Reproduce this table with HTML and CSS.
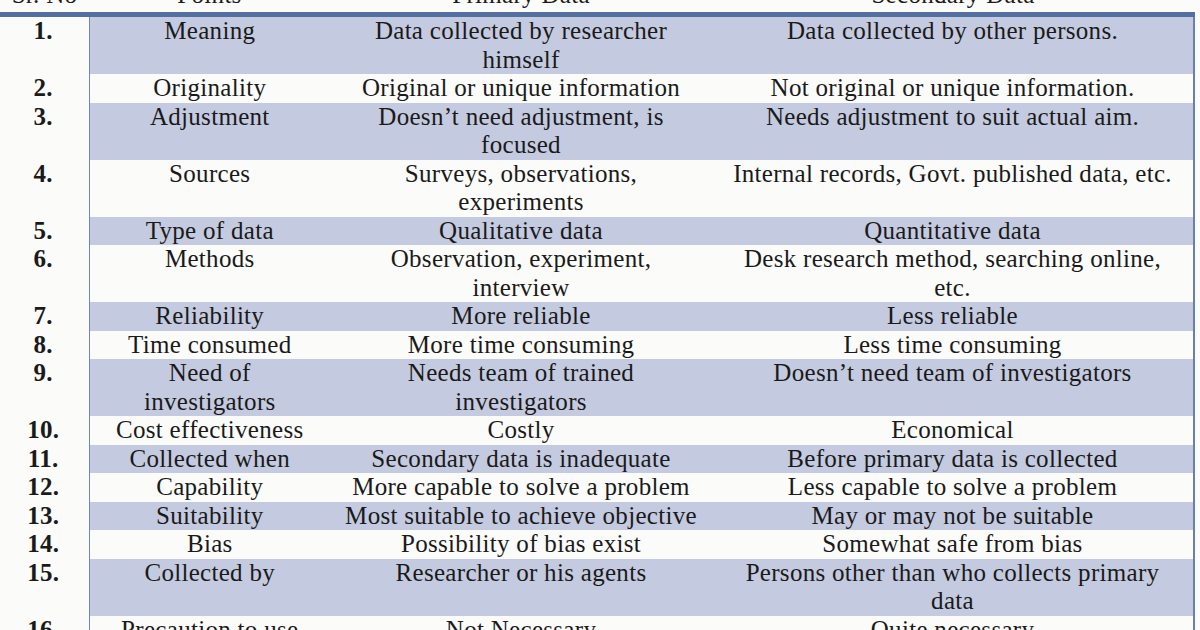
FILE: index.html
```html
<!DOCTYPE html>
<html>
<head>
<meta charset="utf-8">
<link rel="stylesheet" href="styles.css">
</head>
<body>
<table class="cmp">
  <colgroup>
    <col class="c-no"><col class="c-pt"><col class="c-pr"><col class="c-se">
  </colgroup>
  <thead>
    <tr><th>Sr. No</th><th>Points</th><th>Primary Data</th><th>Secondary Data</th></tr>
  </thead>
  <tbody>
    <tr><td class="no">1.</td><td>Meaning</td><td>Data collected by researcher<br>himself</td><td>Data collected by other persons.</td></tr>
    <tr><td class="no">2.</td><td>Originality</td><td>Original or unique information</td><td>Not original or unique information.</td></tr>
    <tr><td class="no">3.</td><td>Adjustment</td><td>Doesn’t need adjustment, is<br>focused</td><td>Needs adjustment to suit actual aim.</td></tr>
    <tr><td class="no">4.</td><td>Sources</td><td>Surveys, observations,<br>experiments</td><td>Internal records, Govt. published data, etc.</td></tr>
    <tr><td class="no">5.</td><td>Type of data</td><td>Qualitative data</td><td>Quantitative data</td></tr>
    <tr><td class="no">6.</td><td>Methods</td><td>Observation, experiment,<br>interview</td><td>Desk research method, searching online,<br>etc.</td></tr>
    <tr><td class="no">7.</td><td>Reliability</td><td>More reliable</td><td>Less reliable</td></tr>
    <tr><td class="no">8.</td><td>Time consumed</td><td>More time consuming</td><td>Less time consuming</td></tr>
    <tr><td class="no">9.</td><td>Need of<br>investigators</td><td>Needs team of trained<br>investigators</td><td>Doesn’t need team of investigators</td></tr>
    <tr><td class="no">10.</td><td>Cost effectiveness</td><td>Costly</td><td>Economical</td></tr>
    <tr><td class="no">11.</td><td>Collected when</td><td>Secondary data is inadequate</td><td>Before primary data is collected</td></tr>
    <tr><td class="no">12.</td><td>Capability</td><td>More capable to solve a problem</td><td>Less capable to solve a problem</td></tr>
    <tr><td class="no">13.</td><td>Suitability</td><td>Most suitable to achieve objective</td><td>May or may not be suitable</td></tr>
    <tr><td class="no">14.</td><td>Bias</td><td>Possibility of bias exist</td><td>Somewhat safe from bias</td></tr>
    <tr><td class="no">15.</td><td>Collected by</td><td>Researcher or his agents</td><td>Persons other than who collects primary<br>data</td></tr>
    <tr><td class="no">16.</td><td>Precaution to use</td><td>Not Necessary</td><td>Quite necessary</td></tr>
  </tbody>
</table>
</body>
</html>
```

FILE: styles.css
```css
html, body {
  margin: 0;
  padding: 0;
  background: #fbfbf9;
  overflow: hidden;
}
body {
  width: 1200px;
  height: 630px;
  font-family: "Liberation Serif", "Times New Roman", serif;
  color: #1a1a1a;
}
.cmp {
  border-collapse: collapse;
  table-layout: fixed;
  width: 1194px;
  margin-top: -19px;
  font-size: 25px;
  letter-spacing: 0.3px;
  line-height: 28.5px;
  white-space: nowrap;
}
.c-no { width: 89px; }
.c-pt { width: 241px; }
.c-pr { width: 382px; }
.c-se { width: 482px; }
.cmp th {
  font-weight: normal;
  height: 31px;
  padding: 0;
  text-align: center;
  vertical-align: top;
  border-bottom: 5px solid #5470a0;
}
.cmp td {
  padding: 0;
  text-align: center;
  vertical-align: top;
}
.cmp td.no {
  font-weight: bold;
  background: #fbfbf9;
  border-right: 1px solid #7088b6;
  padding-right: 2px;
}
.cmp td:last-child {
  border-right: 2px solid #6680b0;
}
.cmp tbody tr:nth-child(odd) td:not(.no) {
  background: #c4cadf;
}
```
